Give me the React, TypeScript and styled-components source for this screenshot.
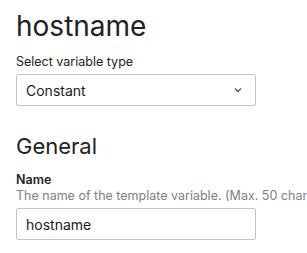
import styled, { createGlobalStyle } from "styled-components";

const GlobalStyle = createGlobalStyle`
  html, body {
    margin: 0;
    padding: 0;
    background: #ffffff;
  }
  body {
    font-family: Inter, "Noto Sans", sans-serif;
    color: #1f1f1f;
  }
`;

const Page = styled.div`
  padding: 9px 16px 0 16px;
  width: 307px;
  box-sizing: border-box;
  overflow: hidden;
`;

const Title = styled.h1`
  margin: 0;
  font-size: 28px;
  font-weight: 400;
  line-height: 34px;
  color: #222222;
`;

const SectionTitle = styled.h2`
  margin: 26px 0 0 0;
  font-size: 22px;
  font-weight: 400;
  line-height: 28px;
  color: #222222;
`;

const Field = styled.div<{ $top: number }>`
  display: flex;
  flex-direction: column;
  margin-top: ${(p) => p.$top}px;
`;

const Label = styled.label<{ $bold?: boolean }>`
  font-size: 12.5px;
  line-height: 16px;
  font-weight: ${(p) => (p.$bold ? 600 : 400)};
  color: #222222;
  margin-bottom: ${(p) => (p.$bold ? 0 : 4)}px;
`;

const Hint = styled.div`
  font-size: 12.5px;
  line-height: 16px;
  color: #808080;
  white-space: nowrap;
  margin-bottom: 4px;
`;

const Box = styled.div`
  width: 240px;
  height: 32px;
  box-sizing: border-box;
  border: 1px solid #c4c4c4;
  border-radius: 2px;
  display: flex;
  align-items: center;
  justify-content: space-between;
  padding: 0 12px 0 9px;
  font-size: 14px;
  color: #222222;
  background: #ffffff;
`;

const Chevron = () => (
  <svg width="10" height="10" viewBox="0 0 10 10">
    <path d="M2 3.5 L5 6.5 L8 3.5" fill="none" stroke="#555" strokeWidth="1.4" />
  </svg>
);

export default function App() {
  return (
    <Page>
      <GlobalStyle />
      <Title>hostname</Title>
      <Field $top={11}>
        <Label>Select variable type</Label>
        <Box>
          <span>Constant</span>
          <Chevron />
        </Box>
      </Field>
      <SectionTitle>General</SectionTitle>
      <Field $top={12}>
        <Label $bold>Name</Label>
        <Hint>The name of the template variable. (Max. 50 characters)</Hint>
        <Box>
          <span>hostname</span>
        </Box>
      </Field>
    </Page>
  );
}
